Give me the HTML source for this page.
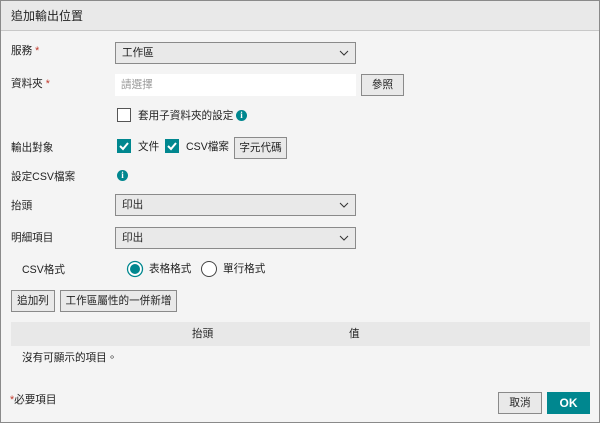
<!DOCTYPE html>
<html><head><meta charset="utf-8"><style>
*{box-sizing:border-box;margin:0;padding:0}
body{width:600px;height:423px;background:#fff;font-family:"Liberation Sans","Noto Sans CJK TC",sans-serif;font-size:10.6px;color:#222;position:relative;overflow:hidden}
.dlg{position:absolute;left:0;top:0;width:600px;height:423px;border:1px solid #8a8a8a;background:#f4f4f4}
.title{position:absolute;left:0;top:0;width:598px;height:30px;background:#e9e9e9;border-bottom:1px solid #c8c8c8;font-size:12px;line-height:30px;padding-left:10px}
.a{position:absolute;white-space:nowrap;line-height:14px}
.star{color:#c0392b}
.sel{position:absolute;left:114px;width:241px;height:22px;border:1px solid #8a8a8a;background:#e9e9e9;padding-left:6px;line-height:20px}
.sel svg{position:absolute;right:6px;top:7px}
.btn{position:absolute;height:22px;border:1px solid #8a8a8a;background:#e9e9e9;text-align:center;line-height:20px;white-space:nowrap;overflow:hidden}
.cb{position:absolute;width:14px;height:14px;border:1px solid #555;background:#fff}
.cbc{position:absolute;width:14px;height:14px;background:#00878f}
.info{position:absolute;width:11px;height:11px;border-radius:50%;background:#00878f;color:#fff;font-size:9px;font-weight:bold;text-align:center;line-height:11px;font-family:"Liberation Serif",serif}
</style></head><body><div class="dlg">
<div class="title">追加輸出位置</div>
<div class="a" style="left:10px;top:43px">服務 <span class="star">*</span></div>
<div class="sel" style="top:41px">工作區<svg width="10" height="6"><path d="M1 1L5 5L9 1" stroke="#333" fill="none"/></svg></div>
<div class="a" style="left:10px;top:76px">資料夾 <span class="star">*</span></div>
<div style="position:absolute;left:114px;top:73px;width:241px;height:22px;background:#fff;color:#999;padding-left:6px;line-height:22px">請選擇</div>
<div class="btn" style="left:360px;top:73px;width:43px">參照</div>
<div class="cb" style="left:116px;top:107px"></div>
<div class="a" style="left:137px;top:108px">套用子資料夾的設定</div>
<div class="info" style="left:235px;top:109px">i</div>
<div class="a" style="left:10px;top:140px">輸出對象</div>
<div class="cbc" style="left:116px;top:138px"><svg width="14" height="14"><path d="M3 7L6 10L11 4" stroke="#fff" stroke-width="2" fill="none"/></svg></div>
<div class="a" style="left:137px;top:139px">文件</div>
<div class="cbc" style="left:164px;top:138px"><svg width="14" height="14"><path d="M3 7L6 10L11 4" stroke="#fff" stroke-width="2" fill="none"/></svg></div>
<div class="a" style="left:185px;top:139px">CSV檔案</div>
<div class="btn" style="left:233px;top:136px;width:53px">字元代碼</div>
<div class="a" style="left:10px;top:169px">設定CSV檔案</div>
<div class="info" style="left:116px;top:169px">i</div>
<div class="a" style="left:10px;top:198px">抬頭</div>
<div class="sel" style="top:193px">印出<svg width="10" height="6"><path d="M1 1L5 5L9 1" stroke="#333" fill="none"/></svg></div>
<div class="a" style="left:10px;top:230px">明細項目</div>
<div class="sel" style="top:226px">印出<svg width="10" height="6"><path d="M1 1L5 5L9 1" stroke="#333" fill="none"/></svg></div>
<div class="a" style="left:21px;top:262px">CSV格式</div>
<svg style="position:absolute;left:125px;top:259px" width="18" height="18"><circle cx="9" cy="9" r="7.5" fill="#fff" stroke="#00878f" stroke-width="1.3"/><circle cx="9" cy="9" r="5" fill="#00878f"/></svg>
<div class="a" style="left:148px;top:261px">表格格式</div>
<svg style="position:absolute;left:199px;top:259px" width="18" height="18"><circle cx="9" cy="9" r="7.5" fill="#fff" stroke="#444" stroke-width="1"/></svg>
<div class="a" style="left:222px;top:261px">單行格式</div>
<div class="btn" style="left:10px;top:289px;width:44px">追加列</div>
<div class="btn" style="left:59px;top:289px;width:117px">工作區屬性的一併新增</div>
<div style="position:absolute;left:10px;top:321px;width:579px;height:24px;background:#e8e8e8"></div>
<div class="a" style="left:191px;top:326px">抬頭</div>
<div class="a" style="left:348px;top:326px">值</div>
<div class="a" style="left:21px;top:350px">沒有可顯示的項目。</div>
<div class="a" style="left:9px;top:392px"><span class="star">*</span>必要項目</div>
<div class="btn" style="left:497px;top:391px;width:44px">取消</div>
<div class="btn" style="left:546px;top:391px;width:43px;background:#00878f;border-color:#00878f;color:#fff;font-weight:bold;font-size:12px">OK</div>
</div></body></html>
